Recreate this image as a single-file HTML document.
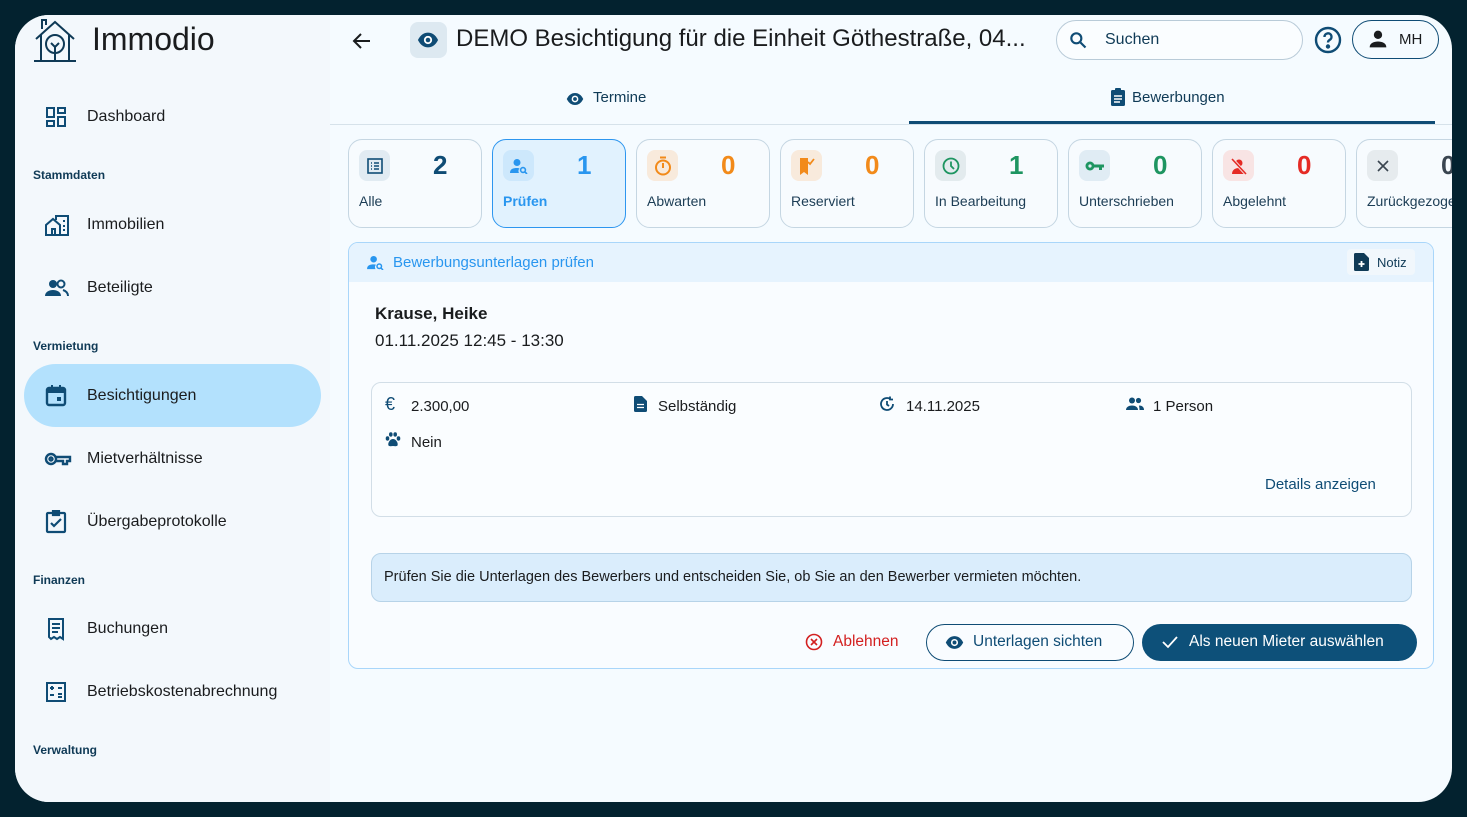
<!DOCTYPE html>
<html><head><meta charset="utf-8"><style>
*{box-sizing:border-box;margin:0;padding:0}
body{width:1467px;height:817px;background:#03222f;font-family:"Liberation Sans",sans-serif;position:relative;overflow:hidden}
.frame{position:absolute;left:15px;top:15px;width:1437px;height:787px;border-radius:34px;overflow:hidden;background:#f5fbff}
.side{position:absolute;left:0;top:0;width:315px;height:787px;background:#f3f8fc}
.abs{position:absolute}
.nav{position:absolute;left:9px;width:297px;height:63px;border-radius:32px;display:flex;align-items:center;font-size:16px;color:#1a1c1e}
.nav svg{position:absolute;left:20px}
.nav span{position:absolute;left:63px}
.sec{position:absolute;left:18px;font-size:12px;font-weight:bold;color:#0f3a56}
.card{position:absolute;top:124px;width:134px;height:89px;border:1.5px solid #c5d6e2;border-radius:14px;background:#f7fbfe}
.card .ic{position:absolute;left:10px;top:10px;width:31px;height:31px;border-radius:8px;display:flex;align-items:center;justify-content:center}
.card .n{position:absolute;left:84px;top:10px;font-size:26px;font-weight:bold}
.card .l{position:absolute;left:10px;top:53px;font-size:14px;color:#1c3d55}
.t{color:#1a1c1e}
</style></head><body>
<div class="frame">
<div class="side">
 <svg class="abs" style="left:17px;top:2px" width="46" height="46" viewBox="0 0 46 46" fill="none" stroke="#0f3a56" stroke-width="2"><path d="M4 22 L23 5 L42 22"/><path d="M9 18 V44 H37 V18"/><path d="M10 12 V3 H14 V8"/><path d="M2 44 H44"/><circle cx="23" cy="27" r="9"/><path d="M23 44 V30 M19 26 l4 4 4-4"/></svg>
 <div class="abs t" style="left:77px;top:6px;font-size:32px">Immodio</div>
 <div class="nav" style="top:70px"><svg width="24" height="24" viewBox="0 0 24 24" fill="none" stroke="#0f4c75" stroke-width="2"><rect x="3" y="3" width="7" height="9"/><rect x="14" y="3" width="7" height="5"/><rect x="14" y="12" width="7" height="9"/><rect x="3" y="16" width="7" height="5"/></svg><span>Dashboard</span></div>
 <div class="sec" style="top:153px">Stammdaten</div>
 <div class="nav" style="top:178px"><svg width="26" height="24" viewBox="0 0 26 24" fill="none" stroke="#0f4c75" stroke-width="2"><path d="M2 22 V12 L9 6 L16 12 V22 Z M8 22 V16 H11 V22"/><path d="M12 7 V3 H24 V22 H16"/><path d="M19 8h2M19 13h2M19 17h2"/></svg><span>Immobilien</span></div>
 <div class="nav" style="top:241px"><svg width="26" height="24" viewBox="0 0 26 24" fill="#0f4c75"><circle cx="9" cy="8" r="4"/><path d="M1 20c0-4 4-6 8-6s8 2 8 6z"/><circle cx="17" cy="8" r="3.5" fill="none" stroke="#0f4c75" stroke-width="2"/><path d="M19 14c3 1 5 3 5 6" fill="none" stroke="#0f4c75" stroke-width="2"/></svg><span>Beteiligte</span></div>
 <div class="sec" style="top:324px">Vermietung</div>
 <div class="nav" style="top:349px;background:#b3e1fd"><svg width="24" height="24" viewBox="0 0 24 24"><rect x="3" y="4" width="18" height="17" rx="2" fill="none" stroke="#0f4c75" stroke-width="2.4"/><rect x="3" y="4" width="18" height="5" fill="#0f4c75"/><rect x="7" y="1" width="2" height="5" fill="#0f4c75"/><rect x="15" y="1" width="2" height="5" fill="#0f4c75"/><rect x="13" y="13" width="4" height="4" fill="#0f4c75"/></svg><span>Besichtigungen</span></div>
 <div class="nav" style="top:412px"><svg width="28" height="24" viewBox="0 0 28 24" fill="none" stroke="#0f4c75" stroke-width="2.4"><circle cx="7" cy="12" r="5"/><circle cx="7" cy="12" r="1.5"/><path d="M12 10 H26 V14 H23 V17 H19 V14 H12"/></svg><span>Mietverhältnisse</span></div>
 <div class="nav" style="top:475px"><svg width="24" height="24" viewBox="0 0 24 24" fill="none" stroke="#0f4c75" stroke-width="2.2"><rect x="3" y="3" width="18" height="19" rx="1"/><rect x="9" y="1" width="6" height="4" fill="#0f4c75"/><path d="M7 13 l3 3 7-7"/></svg><span>Übergabeprotokolle</span></div>
 <div class="sec" style="top:558px">Finanzen</div>
 <div class="nav" style="top:582px"><svg width="24" height="24" viewBox="0 0 24 24" fill="none" stroke="#0f4c75" stroke-width="2"><path d="M5 2 H19 V22 L16 20 13 22 10 20 7 22 5 20 Z"/><path d="M8 7h8M8 11h8M8 15h6"/></svg><span>Buchungen</span></div>
 <div class="nav" style="top:645px"><svg width="24" height="24" viewBox="0 0 24 24" fill="none" stroke="#0f4c75" stroke-width="2"><rect x="3" y="3" width="18" height="18"/><path d="M6 8h4M8 6v4M14 8h4M6 15h4M14 14h4M14 17h4"/></svg><span>Betriebskostenabrechnung</span></div>
 <div class="sec" style="top:728px">Verwaltung</div>
</div>

<!-- top bar -->
<svg class="abs" style="left:335px;top:14px" width="24" height="24" viewBox="0 0 24 24" fill="none" stroke="#1a1c1e" stroke-width="2"><path d="M20 12H5M11 5l-7 7 7 7"/></svg>
<div class="abs" style="left:395px;top:7px;width:37px;height:36px;border-radius:8px;background:#dde9f1"></div>
<svg class="abs" style="left:402px;top:14px" width="22" height="22" viewBox="0 0 24 24"><path d="M1 12C4 6 8 4 12 4s8 2 11 8c-3 6-7 8-11 8S4 18 1 12z" fill="#0f4c75"/><circle cx="12" cy="12" r="4.5" fill="#fff"/><circle cx="12" cy="12" r="2.5" fill="#0f4c75"/></svg>
<div class="abs t" style="left:441px;top:10px;font-size:24px">DEMO Besichtigung für die Einheit Göthestraße, 04...</div>
<div class="abs" style="left:1041px;top:5px;width:247px;height:40px;border:1.5px solid #b9cbd8;border-radius:20px;background:#fafdff"></div>
<svg class="abs" style="left:1053px;top:15px" width="20" height="20" viewBox="0 0 24 24" fill="none" stroke="#0f4c75" stroke-width="2.6"><circle cx="10" cy="10" r="6"/><path d="M15 15l6 6"/></svg>
<div class="abs" style="left:1090px;top:16px;font-size:16px;color:#0f3a56">Suchen</div>
<svg class="abs" style="left:1299px;top:11px" width="28" height="28" viewBox="0 0 28 28" fill="none" stroke="#0f4c75" stroke-width="2.4"><circle cx="14" cy="14" r="12"/><path d="M10.5 11a3.5 3.5 0 1 1 5 3c-1 .6-1.5 1.2-1.5 2.5"/><circle cx="14" cy="20.5" r="1" fill="#0f4c75"/></svg>
<div class="abs" style="left:1337px;top:5px;width:87px;height:39px;border:1.5px solid #0f4c75;border-radius:20px"></div>
<svg class="abs" style="left:1353px;top:14px" width="20" height="20" viewBox="0 0 24 24" fill="#1a1c1e"><circle cx="12" cy="7" r="5"/><path d="M2 22c0-5 5-7 10-7s10 2 10 7z"/></svg>
<div class="abs t" style="left:1384px;top:16px;font-size:15px">MH</div>

<!-- tabs -->
<svg class="abs" style="left:551px;top:75px" width="18" height="18" viewBox="0 0 24 24"><path d="M1 12C4 6 8 4 12 4s8 2 11 8c-3 6-7 8-11 8S4 18 1 12z" fill="#0f4c75"/><circle cx="12" cy="12" r="4.5" fill="#fff"/><circle cx="12" cy="12" r="2.5" fill="#0f4c75"/></svg>
<div class="abs" style="left:578px;top:74px;font-size:15px;color:#0f3a56">Termine</div>
<svg class="abs" style="left:1095px;top:73px" width="16" height="18" viewBox="0 0 16 18" fill="#0f4c75"><rect x="1" y="2" width="14" height="16" rx="1.5"/><rect x="5" y="0" width="6" height="3" rx="1"/><path d="M4 8h8M4 11h8M4 14h6" stroke="#fff" stroke-width="1.4"/></svg>
<div class="abs" style="left:1117px;top:74px;font-size:15px;color:#0f3a56">Bewerbungen</div>
<div class="abs" style="left:315px;top:109px;width:1122px;height:1px;background:#d6e2ea"></div>
<div class="abs" style="left:894px;top:106px;width:526px;height:3px;background:#0f4c75"></div>

<!-- cards -->
<div class="card" style="left:333px"><div class="ic" style="background:#e1ebf2"><svg width="16" height="16" viewBox="0 0 16 16" fill="none" stroke="#0f4c75" stroke-width="1.6"><rect x="1" y="1" width="14" height="14"/><path d="M4 5h1M7 5h5M4 8h1M7 8h5M4 11h1M7 11h5"/></svg></div><div class="n" style="color:#0f4c75">2</div><div class="l">Alle</div></div>
<div class="card" style="left:477px;border-color:#2d96ef;background:#e1f2fe"><div class="ic" style="background:#cde8fc"><svg width="18" height="16" viewBox="0 0 18 16" fill="#2996ef"><circle cx="7" cy="4.5" r="3.5"/><path d="M0 15c0-4 3-5 7-5 1 0 2 .2 2.5.4A4 4 0 0 0 9 15z"/><circle cx="13" cy="12" r="2.4" fill="none" stroke="#2996ef" stroke-width="1.6"/><path d="M14.6 13.6l2.4 2.4" stroke="#2996ef" stroke-width="1.6"/></svg></div><div class="n" style="color:#2996ef">1</div><div class="l" style="color:#2996ef;font-weight:bold">Prüfen</div></div>
<div class="card" style="left:621px"><div class="ic" style="background:#f8eadc"><svg width="18" height="20" viewBox="0 0 18 20" fill="none" stroke="#f28a1a" stroke-width="2"><circle cx="9" cy="11.5" r="7"/><path d="M6 1.5h6M9 7v5"/></svg></div><div class="n" style="color:#f28a1a">0</div><div class="l">Abwarten</div></div>
<div class="card" style="left:765px"><div class="ic" style="background:#f8eadc"><svg width="16" height="18" viewBox="0 0 16 18" fill="#f28a1a"><path d="M1 1h8v17l-4-3-4 3z"/><path d="M9 5l2 2 4-5" fill="none" stroke="#f28a1a" stroke-width="1.8"/></svg></div><div class="n" style="color:#f28a1a">0</div><div class="l">Reserviert</div></div>
<div class="card" style="left:909px"><div class="ic" style="background:#e3ebee"><svg width="18" height="18" viewBox="0 0 18 18" fill="none" stroke="#1e9561" stroke-width="1.8"><circle cx="9" cy="9" r="7.5"/><path d="M9 4.5V9l3 3"/></svg></div><div class="n" style="color:#1e9561">1</div><div class="l">In Bearbeitung</div></div>
<div class="card" style="left:1053px"><div class="ic" style="background:#e0ecf4"><svg width="20" height="12" viewBox="0 0 20 12" fill="#1e9561"><circle cx="5" cy="6" r="4.5"/><circle cx="5" cy="6" r="1.6" fill="#e0ecf4"/><path d="M9 4.5h10v3h-2v2.5h-3V7.5H9z"/></svg></div><div class="n" style="color:#1e9561">0</div><div class="l">Unterschrieben</div></div>
<div class="card" style="left:1197px"><div class="ic" style="background:#f8e4e4"><svg width="18" height="18" viewBox="0 0 18 18" fill="#e52b25"><circle cx="9" cy="6" r="3.5"/><path d="M2 17c0-4 3-6 7-6s7 2 7 6z"/><path d="M2 2l14 15" stroke="#f8e4e4" stroke-width="3.4"/><path d="M2 2l14 15" stroke="#e52b25" stroke-width="1.6"/></svg></div><div class="n" style="color:#e52b25">0</div><div class="l">Abgelehnt</div></div>
<div class="card" style="left:1341px"><div class="ic" style="background:#e6ebee"><svg width="14" height="14" viewBox="0 0 14 14" stroke="#3a4550" stroke-width="1.6"><path d="M2 2l10 10M12 2L2 12"/></svg></div><div class="n" style="color:#3a4550">0</div><div class="l" style="white-space:nowrap">Zurückgezogen</div></div>

<!-- main panel -->
<div class="abs" style="left:333px;top:227px;width:1086px;height:427px;border:1.5px solid #a9d6fa;border-radius:10px;background:#f9fcff;overflow:hidden">
 <div class="abs" style="left:0;top:0;width:100%;height:39px;background:#e6f3fe"></div>
 <svg class="abs" style="left:18px;top:12px" width="17" height="15" viewBox="0 0 18 16" fill="#2996ef"><circle cx="7" cy="4.5" r="3.5"/><path d="M0 15c0-4 3-5 7-5 1 0 2 .2 2.5.4A4 4 0 0 0 9 15z"/><circle cx="13" cy="12" r="2.4" fill="none" stroke="#2996ef" stroke-width="1.6"/><path d="M14.6 13.6l2.4 2.4" stroke="#2996ef" stroke-width="1.6"/></svg>
 <div class="abs" style="left:44px;top:11px;font-size:15px;color:#2996ef">Bewerbungsunterlagen prüfen</div>
 <div class="abs" style="left:998px;top:6px;width:68px;height:26px;background:#f1f7fc;border-radius:4px"></div>
 <svg class="abs" style="left:1005px;top:10px" width="15" height="18" viewBox="0 0 15 18" fill="#0f3a56"><path d="M0 1.5A1.5 1.5 0 0 1 1.5 0H10l5 5v11.5a1.5 1.5 0 0 1-1.5 1.5h-12A1.5 1.5 0 0 1 0 16.5z"/><path d="M7.5 8v6M4.5 11h6" stroke="#fff" stroke-width="1.8"/></svg>
 <div class="abs" style="left:1028px;top:12px;font-size:13px;color:#0f3a56">Notiz</div>
 <div class="abs t" style="left:26px;top:61px;font-size:17px;font-weight:bold">Krause, Heike</div>
 <div class="abs t" style="left:26px;top:88px;font-size:17px">01.11.2025 12:45 - 13:30</div>
 <div class="abs" style="left:22px;top:139px;width:1041px;height:135px;border:1.5px solid #d2dee7;border-radius:10px;background:#fafdff"></div>
 <div class="abs" style="left:36px;top:151px;font-size:18px;color:#0f4c75">€</div>
 <div class="abs t" style="left:62px;top:155px;font-size:15px">2.300,00</div>
 <svg class="abs" style="left:285px;top:153px" width="13" height="16" viewBox="0 0 13 16" fill="#0f4c75"><path d="M0 1.5A1.5 1.5 0 0 1 1.5 0H8l5 5v9.5a1.5 1.5 0 0 1-1.5 1.5h-10A1.5 1.5 0 0 1 0 14.5z"/><path d="M3 8.5h7M3 11.5h7" stroke="#fff" stroke-width="1.3"/></svg>
 <div class="abs t" style="left:309px;top:155px;font-size:15px">Selbständig</div>
 <svg class="abs" style="left:530px;top:153px" width="16" height="16" viewBox="0 0 16 16" fill="none" stroke="#0f4c75" stroke-width="1.8"><path d="M14 8A6 6 0 1 1 11 2.8"/><path d="M11 0.5v3h3" /><path d="M8 5v3.5l2 1.5"/></svg>
 <div class="abs t" style="left:557px;top:155px;font-size:15px">14.11.2025</div>
 <svg class="abs" style="left:777px;top:154px" width="18" height="13" viewBox="0 0 18 13" fill="#0f4c75"><circle cx="6" cy="3.5" r="3"/><circle cx="12.5" cy="3.5" r="2.6"/><path d="M0 13c0-3 3-4.5 6-4.5s6 1.5 6 4.5z"/><path d="M13 8.5c3 0 5 1.5 5 4.5h-4.5c0-1.8-.4-3.300-.5-4.5z"/></svg>
 <div class="abs t" style="left:804px;top:155px;font-size:15px">1 Person</div>
 <svg class="abs" style="left:36px;top:189px" width="16" height="15" viewBox="0 0 16 15" fill="#0f4c75"><ellipse cx="2.5" cy="6.5" rx="1.8" ry="2.2"/><ellipse cx="13.5" cy="6.5" rx="1.8" ry="2.2"/><ellipse cx="5.8" cy="2.5" rx="1.8" ry="2.2"/><ellipse cx="10.2" cy="2.5" rx="1.8" ry="2.2"/><path d="M8 7c-3 0-5.5 4-4.5 6.5 1 1.2 3 .5 4.5.5s3.5.7 4.5-.5C13.5 11 11 7 8 7z"/></svg>
 <div class="abs t" style="left:62px;top:191px;font-size:15px">Nein</div>
 <div class="abs" style="left:916px;top:233px;font-size:15px;color:#0f4c75">Details anzeigen</div>
 <div class="abs" style="left:22px;top:310px;width:1041px;height:49px;border:1.5px solid #b7d3e8;border-radius:10px;background:#daedfc"></div>
 <div class="abs t" style="left:35px;top:326px;font-size:14.5px">Prüfen Sie die Unterlagen des Bewerbers und entscheiden Sie, ob Sie an den Bewerber vermieten möchten.</div>
 <svg class="abs" style="left:456px;top:390px" width="18" height="18" viewBox="0 0 18 18" fill="none" stroke="#d32020" stroke-width="1.6"><circle cx="9" cy="9" r="7.5"/><path d="M6 6l6 6M12 6l-6 6"/></svg>
 <div class="abs" style="left:484px;top:390px;font-size:15.5px;color:#d32020">Ablehnen</div>
 <div class="abs" style="left:577px;top:381px;width:208px;height:37px;border:1.5px solid #0f4c75;border-radius:19px"></div>
 <svg class="abs" style="left:596px;top:390px" width="19" height="19" viewBox="0 0 24 24"><path d="M1 12C4 6 8 4 12 4s8 2 11 8c-3 6-7 8-11 8S4 18 1 12z" fill="#0f4c75"/><circle cx="12" cy="12" r="4.5" fill="#fff"/><circle cx="12" cy="12" r="2.5" fill="#0f4c75"/></svg>
 <div class="abs" style="left:624px;top:390px;font-size:15.5px;color:#0f4c75">Unterlagen sichten</div>
 <div class="abs" style="left:793px;top:381px;width:275px;height:37px;border-radius:19px;background:#0d5079"></div>
 <svg class="abs" style="left:812px;top:391px" width="18" height="16" viewBox="0 0 18 16" fill="none" stroke="#fff" stroke-width="1.8"><path d="M2 8l5 5 9-10"/></svg>
 <div class="abs" style="left:840px;top:390px;font-size:15.5px;color:#fff">Als neuen Mieter auswählen</div>
</div>
</div>
</body></html>
